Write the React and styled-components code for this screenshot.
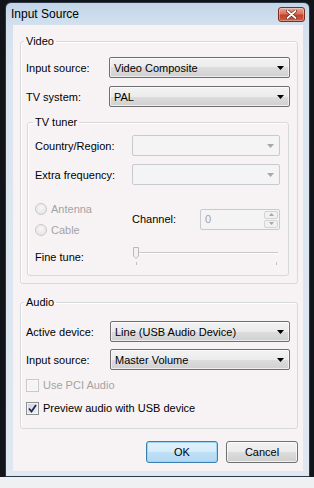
import React from "react";
import styled, { createGlobalStyle } from "styled-components";

const Global = createGlobalStyle`
  html, body { margin: 0; padding: 0; }
  body {
    width: 314px; height: 488px; overflow: hidden;
    background: #121519;
    font-family: "Liberation Sans", Arial, sans-serif;
    font-size: 11px; color: #000;
  }
  #root { width: 314px; height: 488px; }
  * { box-sizing: border-box; }
`;

const Desktop = styled.div`
  width: 314px; height: 488px;
  display: grid;
  grid-template-columns: 5px 305px 4px;
  grid-template-rows: 2px 475px 11px;
  background: #111418;
`;

const BottomStrip = styled.div`
  grid-column: 1 / -1;
  grid-row: 3;
  background: #eef0f2;
`;

const Window = styled.div`
  grid-column: 2;
  grid-row: 2;
  display: flex;
  flex-direction: column;
  border: 1px solid #2b3846;
  border-radius: 6px 6px 0 0;
  background: linear-gradient(#c3d5e8 0px, #d3e1ee 22px, #dbe5ef 60px, #dfe8f1 100%);
  padding: 0 6px 5px 7px;
`;

const TitleBar = styled.div`
  height: 22px;
  display: flex;
  align-items: center;
  justify-content: space-between;
  margin: 0 -2px 0 -2px;
`;

const Title = styled.span`
  font-size: 12px;
  color: #000;
`;

const CloseButton = styled.div`
  width: 27px; height: 15px;
  display: flex; align-items: center; justify-content: center;
  border: 1px solid #7d2c20;
  border-radius: 3px;
  background: linear-gradient(#e9a898 0%, #d9705a 45%, #c3412c 55%, #cc5a42 100%);
  box-shadow: inset 0 0 0 1px rgba(255,255,255,0.35);
`;

const Client = styled.div`
  flex: 1;
  background: #f7f3f5;
  display: flex;
  flex-direction: column;
  padding: 9px 5px 0 7px;
`;

const Group = styled.fieldset`
  margin: ${p => p.$m || "0"};
  padding: ${p => p.$p};
  border: 1px solid #d6d9dc;
  border-radius: 3px;
  min-width: 0;
  box-shadow: inset 1px 1px 0 #fff;
`;

const Legend = styled.legend`
  padding: 0 2px;
  margin-left: -2px;
  line-height: 14px;
  font-size: 11px;
  color: #000;
`;

const Row = styled.div`
  display: flex;
  align-items: center;
  height: ${p => p.$h || 21}px;
  margin-top: ${p => p.$mt || 0}px;
`;

const Label = styled.span`
  width: ${p => p.$w}px;
  flex: none;
  color: ${p => (p.$disabled ? "#a3a3a3" : "#000")};
  white-space: nowrap;
`;

const SelectBox = styled.div`
  width: ${p => p.$w}px;
  height: 21px;
  flex: none;
  display: flex;
  align-items: center;
  justify-content: space-between;
  padding: 0 5px 0 4px;
  border: 1px solid ${p => (p.$disabled ? "#c7cbcf" : "#707070")};
  border-radius: 2px;
  background: ${p =>
    p.$disabled
      ? "#f4f4f4"
      : "linear-gradient(#f3f3f3 0%, #ebebeb 50%, #dddddd 50%, #d0d0d0 100%)"};
  box-shadow: inset 0 0 0 1px ${p => (p.$disabled ? "transparent" : "rgba(255,255,255,0.6)")};
  color: #000;
`;

const Arrow = ({ color = "#000" }) => (
  <svg width="7" height="4" viewBox="0 0 7 4">
    <path d="M0 0 H7 L3.5 4 Z" fill={color} />
  </svg>
);

const Select = ({ w, value, disabled }) => (
  <SelectBox $w={w} $disabled={disabled}>
    <span>{value}</span>
    <Arrow color={disabled ? "#a8a8a8" : "#000"} />
  </SelectBox>
);

const TunerGrid = styled.div`
  display: grid;
  grid-template-columns: 97px 68px 80px;
  grid-template-rows: 21px 21px;
  align-items: center;
  margin-top: 13px;
`;

const RadioRow = styled.div`
  display: flex;
  align-items: center;
  gap: 4px;
  color: #a3a3a3;
  grid-column: 1;
`;

const RadioCircle = styled.span`
  width: 12px; height: 12px;
  border-radius: 50%;
  border: 1px solid #c9c9c9;
  background: radial-gradient(circle at 50% 40%, #f6f6f6, #e2e2e2);
`;

const ChannelLabel = styled.span`
  grid-column: 2;
  grid-row: 1 / span 2;
`;

const SpinBox = styled.div`
  grid-column: 3;
  grid-row: 1 / span 2;
  height: 21px;
  display: flex;
  border: 1px solid #c7cbcf;
  border-radius: 2px;
  background: #f4f4f4;
  color: #a3a3a3;
`;

const SpinText = styled.span`
  flex: 1;
  padding-left: 4px;
  line-height: 19px;
`;

const SpinButtons = styled.div`
  width: 15px;
  display: flex;
  flex-direction: column;
  gap: 1px;
  padding: 1px 1px 1px 0;
`;

const SpinHalf = styled.div`
  flex: 1;
  display: flex;
  align-items: center;
  justify-content: center;
  border: 1px solid #d3d3d3;
  border-radius: 2px;
  background: #f1f1f1;
`;

const Slider = () => (
  <svg width="148" height="22" viewBox="0 0 148 22">
    <rect x="2" y="6" width="144" height="1" fill="#c9c9c9" />
    <rect x="2" y="7" width="144" height="1" fill="#ffffff" />
    <path d="M1.5 1.5 H6.5 V10 L4 12.5 L1.5 10 Z" fill="#f2f2f2" stroke="#b9b9b9" />
    <rect x="4" y="16" width="1" height="3" fill="#c0c0c0" />
    <rect x="144" y="16" width="1" height="3" fill="#c0c0c0" />
  </svg>
);

const CheckRow = styled.div`
  display: flex;
  align-items: center;
  gap: 4px;
  height: 20px;
  margin-top: ${p => p.$mt}px;
  color: ${p => (p.$disabled ? "#a3a3a3" : "#000")};
`;

const CheckBox = styled.span`
  width: 13px; height: 13px;
  flex: none;
  display: flex; align-items: center; justify-content: center;
  border: 1px solid ${p => (p.$disabled ? "#c9c9c9" : "#8e8f8f")};
  background: ${p =>
    p.$disabled ? "#f4f4f4" : "linear-gradient(135deg, #cbcfd5, #f6f6f6)"};
  box-shadow: inset 0 0 0 1px ${p => (p.$disabled ? "#f8f8f8" : "#f4f4f4")};
`;

const ButtonRow = styled.div`
  display: flex;
  justify-content: flex-end;
  gap: 8px;
  margin-top: 12px;
`;

const Button = styled.div`
  width: 72px; height: 22px;
  display: flex; align-items: center; justify-content: center;
  border: 1px solid ${p => (p.$focus ? "#3c7fb1" : "#707070")};
  border-radius: 3px;
  background: ${p =>
    p.$focus
      ? "linear-gradient(#e3f1fb 0%, #d5ebfa 50%, #bfe0f6 50%, #b4d9f3 100%)"
      : "linear-gradient(#f2f2f2 0%, #ebebeb 50%, #dddddd 50%, #cfcfcf 100%)"};
  box-shadow: inset 0 0 0 1px ${p => (p.$focus ? "#9fd3f3" : "rgba(255,255,255,0.7)")};
  color: #000;
`;

export default function App() {
  return (
    <>
      <Global />
      <Desktop>
        <Window>
          <TitleBar>
            <Title>Input Source</Title>
            <CloseButton>
              <svg width="11" height="9" viewBox="0 0 11 9">
                <path d="M1.5 1 L9.5 8 M9.5 1 L1.5 8" stroke="#5a1a10" strokeWidth="3" strokeLinecap="round" />
                <path d="M1.5 1 L9.5 8 M9.5 1 L1.5 8" stroke="#fff" strokeWidth="1.8" strokeLinecap="round" />
              </svg>
            </CloseButton>
          </TitleBar>
          <Client>
            <Group $p="9px 6px 7px 5px">
              <Legend>Video</Legend>
              <Row>
                <Label $w={83}>Input source:</Label>
                <Select w={181} value="Video Composite" />
              </Row>
              <Row $mt={8}>
                <Label $w={83}>TV system:</Label>
                <Select w={181} value="PAL" />
              </Row>
              <Group $m="8px 2px 0 1px" $p="6px 7px 7px 7px">
                <Legend>TV tuner</Legend>
                <Row>
                  <Label $w={97}>Country/Region:</Label>
                  <Select w={148} value="" disabled />
                </Row>
                <Row $mt={8}>
                  <Label $w={97}>Extra frequency:</Label>
                  <Select w={148} value="" disabled />
                </Row>
                <TunerGrid>
                  <RadioRow>
                    <RadioCircle />
                    <span>Antenna</span>
                  </RadioRow>
                  <RadioRow>
                    <RadioCircle />
                    <span>Cable</span>
                  </RadioRow>
                  <ChannelLabel>Channel:</ChannelLabel>
                  <SpinBox>
                    <SpinText>0</SpinText>
                    <SpinButtons>
                      <SpinHalf>
                        <svg width="5" height="3" viewBox="0 0 5 3"><path d="M0 3 L2.5 0 L5 3Z" fill="#a8a8a8" /></svg>
                      </SpinHalf>
                      <SpinHalf>
                        <svg width="5" height="3" viewBox="0 0 5 3"><path d="M0 0 L2.5 3 L5 0Z" fill="#a8a8a8" /></svg>
                      </SpinHalf>
                    </SpinButtons>
                  </SpinBox>
                </TunerGrid>
                <Row $h={22} $mt={6}>
                  <Label $w={97}>Fine tune:</Label>
                  <Slider />
                </Row>
              </Group>
            </Group>
            <Group $m="11px 0 0 0" $p="12px 6px 10px 5px">
              <Legend>Audio</Legend>
              <Row>
                <Label $w={84}>Active device:</Label>
                <Select w={180} value="Line (USB Audio Device)" />
              </Row>
              <Row $mt={7}>
                <Label $w={84}>Input source:</Label>
                <Select w={180} value="Master Volume" />
              </Row>
              <CheckRow $mt={5} $disabled>
                <CheckBox $disabled />
                <span>Use PCI Audio</span>
              </CheckRow>
              <CheckRow $mt={3}>
                <CheckBox>
                  <svg width="9" height="9" viewBox="0 0 9 9">
                    <path d="M1 4.5 L3.5 7.5 L8 1" fill="none" stroke="#1d2a5c" strokeWidth="1.8" />
                  </svg>
                </CheckBox>
                <span>Preview audio with USB device</span>
              </CheckRow>
            </Group>
            <ButtonRow>
              <Button $focus>OK</Button>
              <Button>Cancel</Button>
            </ButtonRow>
          </Client>
        </Window>
        <BottomStrip />
      </Desktop>
    </>
  );
}
